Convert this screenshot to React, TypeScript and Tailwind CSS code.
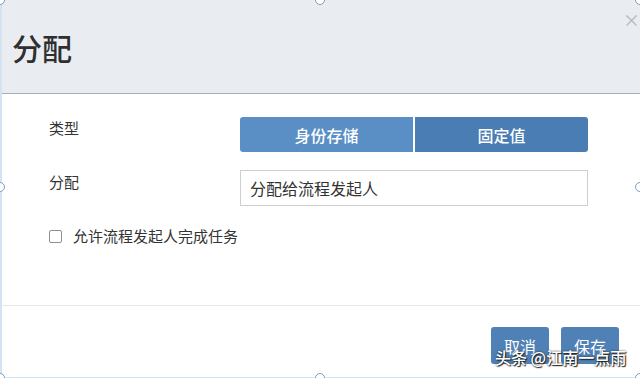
import React from 'react';

const font = { fontFamily: '"Noto Sans CJK SC", "Noto Sans", sans-serif' };

// resize handles sitting on the frame edges
const handles = [
  'left-[-5px] top-[-5px]',
  'left-[315px] top-[-5px]',
  'left-[635px] top-[-5px]',
  'left-[-5px] top-[182px]',
  'left-[635px] top-[182px]',
  'left-[-5px] top-[373px]',
  'left-[315px] top-[373px]',
  'left-[635px] top-[373px]',
];

export default function App() {
  return (
    <div className="relative w-[640px] h-[378px] overflow-hidden bg-white text-[#333]" style={font}>
      <div className="flex flex-col h-full border-l-2 border-b border-[#d3e3f2]">
        {/* Header */}
        <div className="relative h-[94px] shrink-0 bg-[#e9edf2] border-b border-[#a7aeb6] flex items-center pl-[10px]">
          <h1 className="text-[30px] font-medium leading-none text-[#2f2f2f]">分配</h1>
          <span className="absolute right-[0px] top-[11px] text-[17px] leading-none text-[#b5b5b5]">×</span>
        </div>

        {/* Body */}
        <div className="flex-1 pt-[23px] pl-[47px] pr-[52px]">
          <div className="grid grid-cols-[191px_1fr] gap-y-[18px]">
            <div className="text-[15px] leading-5 pt-[1px]">类型</div>
            <div className="flex h-[35px] rounded-[3px] overflow-hidden">
              <button className="flex-1 bg-[#5a8fc5] text-white text-[16px] font-medium">身份存储</button>
              <div className="w-[2px] bg-white" />
              <button className="flex-1 bg-[#4a7db4] text-white text-[16px] font-medium">固定值</button>
            </div>

            <div className="text-[15px] leading-5 pt-[2px]">分配</div>
            <div className="h-[36px] border border-[#cfcfcf] flex items-center px-[9px] text-[16px]">
              分配给流程发起人
            </div>
          </div>

          <label className="flex items-center gap-[11px] mt-[22px] h-[17px] text-[15px]">
            <span className="w-[13px] h-[13px] border border-[#8e8e8e] rounded-[2px] bg-white" />
            允许流程发起人完成任务
          </label>
        </div>

        {/* Footer */}
        <div className="h-[72px] shrink-0 border-t border-[#e6e6e6] flex justify-end items-start pt-[21px] pr-[21px] gap-[12px]">
          <button className="w-[58px] h-[37px] rounded-[3px] bg-[#4f80b6] text-white text-[16px]">取消</button>
          <button className="w-[58px] h-[37px] rounded-[3px] bg-[#4f80b6] text-white text-[16px]">保存</button>
        </div>
      </div>

      {handles.map((pos) => (
        <span
          key={pos}
          className={`absolute ${pos} w-[10px] h-[10px] rounded-full border border-[#7d9cc0] bg-white`}
        />
      ))}

      {/* watermark */}
      <div
        className="absolute left-[495px] top-[347px] text-[16px] leading-5 text-white font-medium"
        style={{ textShadow: '0 0 2px #222, 1px 1px 1px #222' }}
      >
        头条 @江南一点雨
      </div>
    </div>
  );
}
